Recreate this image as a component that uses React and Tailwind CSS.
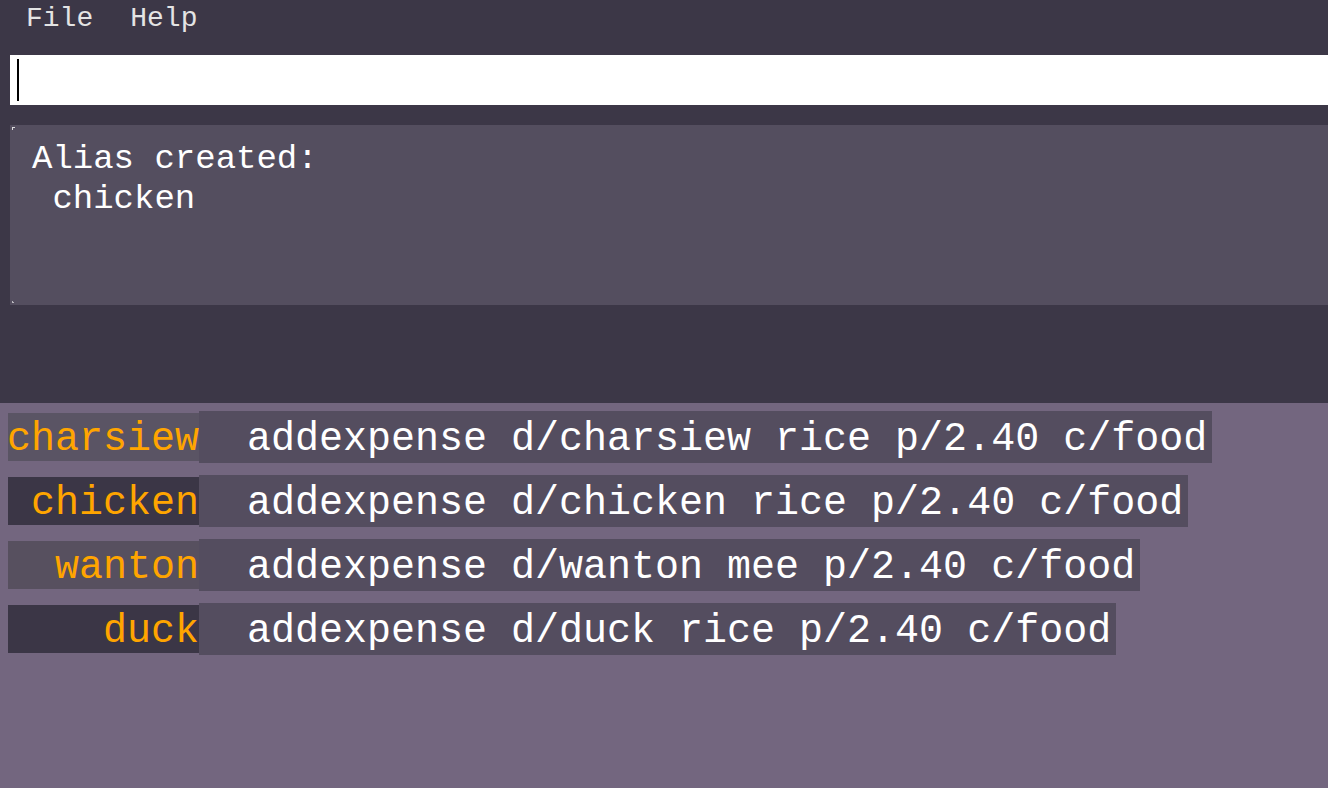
import React from "react";

const aliases = [
  { name: "charsiew", cmd: "addexpense d/charsiew rice p/2.40 c/food", bg: "bg-[#5a5464]" },
  { name: "chicken", cmd: "addexpense d/chicken rice p/2.40 c/food", bg: "bg-[#3b3646]" },
  { name: "wanton", cmd: "addexpense d/wanton mee p/2.40 c/food", bg: "bg-[#57505f]" },
  { name: "duck", cmd: "addexpense d/duck rice p/2.40 c/food", bg: "bg-[#3b3646]" },
];

const App = () => {
  return (
    <div className="w-[1328px] h-[788px] flex flex-col bg-[#3c3747] overflow-hidden font-['Courier_New','Nimbus_Mono_PS','FreeMono','Liberation_Mono',monospace]">

      {/* Menu bar */}
      <div className="h-[55px] flex items-start pl-[26px] pt-[1px] gap-[37px] text-[28px] leading-[36px] text-[#e4e4e4]">
        <span>File</span>
        <span>Help</span>
      </div>

      {/* Command box */}
      <div className="ml-[10px] h-[50px] bg-white flex items-center pl-[7px]">
        <div className="w-[2px] h-[42px] bg-black" />
      </div>

      {/* Result display */}
      <div className="relative ml-[10px] mt-[20px] h-[180px] bg-[#544e5f] pl-[22px] pt-[14px] text-[34px] leading-[40px] text-white whitespace-pre">
        <div>Alias created:</div>
        <div> chicken</div>
        <span className="absolute left-[2px] top-[2px] w-[3px] h-[3px] border-l border-t border-white/80" />
        <span className="absolute left-[2px] bottom-[2px] w-[2px] h-[2px] border-l border-b border-white/60" />
      </div>

      {/* Alias list */}
      <div className="mt-[98px] flex-1 bg-[#73667f] pt-[8px] flex flex-col gap-[12px] text-[40px] leading-[48px]">
        {aliases.map((a) => (
          <div key={a.name} className="flex items-center h-[52px]">
            <div className={`${a.bg} ml-[8px] w-[191px] h-[48px] flex items-center justify-end pt-[5px] text-[#ffa500] whitespace-pre`}>
              {a.name}
            </div>
            <div className="h-[52px] bg-[#544d5f] flex items-center pt-[5px] pr-[5px] text-white whitespace-pre">
              {"  " + a.cmd}
            </div>
          </div>
        ))}
      </div>

    </div>
  );
};

export default App;
